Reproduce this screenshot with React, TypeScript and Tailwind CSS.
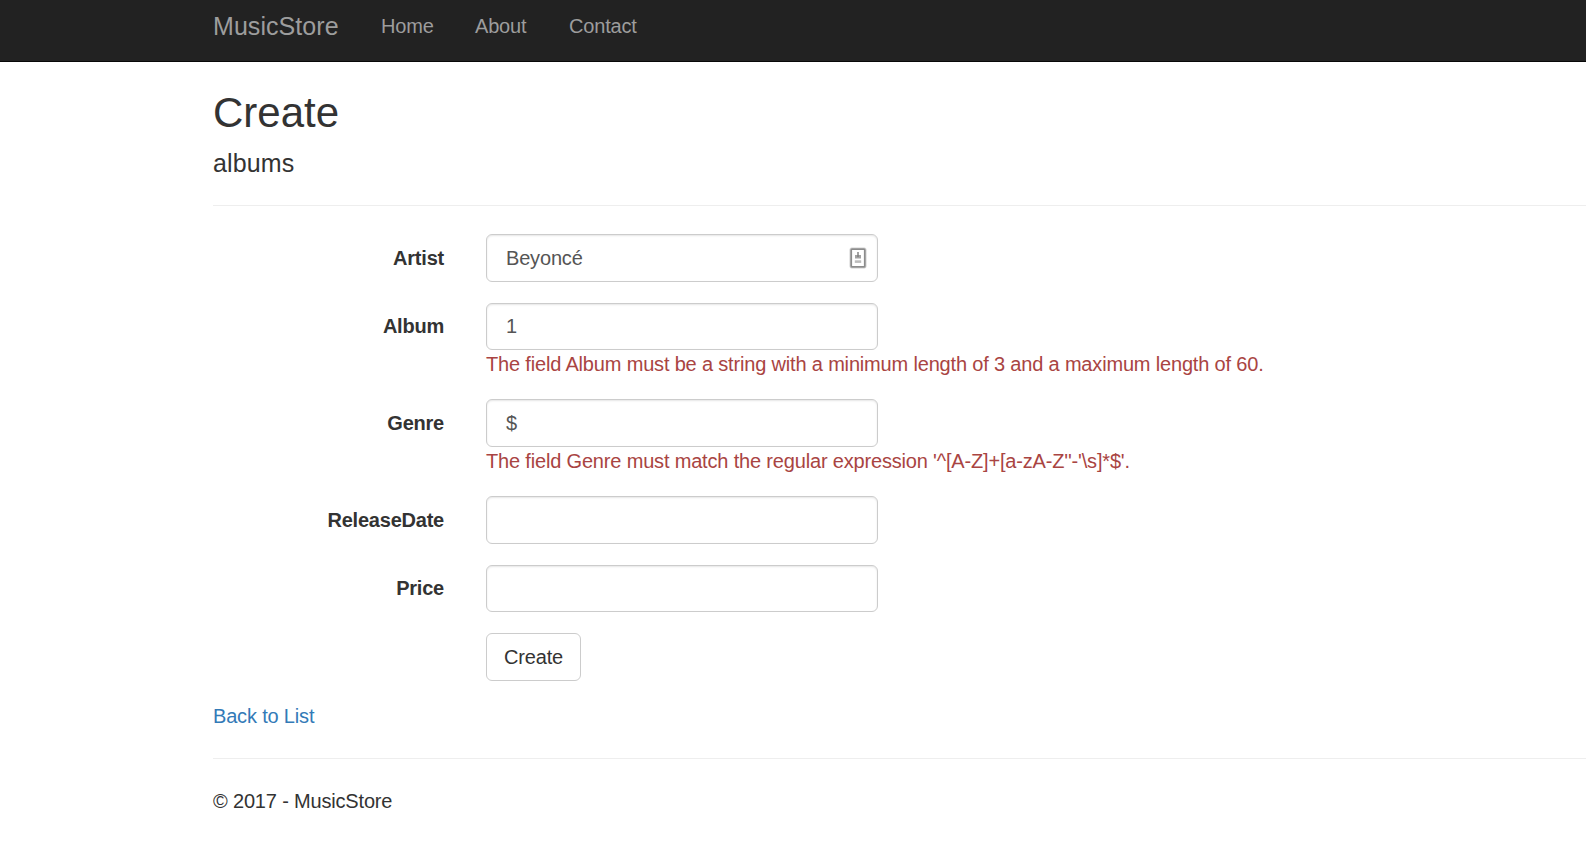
import type { ReactNode } from 'react';

type RowProps = { label?: string; pad?: string; className: string; error?: ReactNode; children: ReactNode };

function Row({ label, pad = 'pt-2.5', className, error, children }: RowProps) {
  return (
    <div className={`flex ${className}`}>
      <label className={`w-[231px] mr-[42px] text-right font-bold tracking-[-0.22px] ${pad}`}>{label}</label>
      <div className="flex-1 flex flex-col items-start">
        {children}
        {error && <span className="text-[#a94442] whitespace-nowrap">{error}</span>}
      </div>
    </div>
  );
}

function Field({ value, className, children }: { value?: string; className: string; children?: ReactNode }) {
  return (
    <div className={`flex w-[392px] justify-between rounded-[6px] border-[1.4px] border-[#ccc] bg-white pl-[19px] pr-[10px] text-[#555] shadow-[inset_0_1px_2px_rgba(0,0,0,0.1)] ${className}`}>
      <span>{value}</span>
      {children}
    </div>
  );
}

function ContactCardIcon() {
  return (
    <svg className="mt-[3px] h-[22px] w-[18px]" viewBox="0 0 18 22" fill="none">
      <rect x="1" y="1" width="16" height="20" rx="1.5" stroke="#d0d0d0" strokeWidth="1" />
      <rect x="2.2" y="2.2" width="13.6" height="17.6" rx="0.6" stroke="#8c8c8c" strokeWidth="1.8" />
      <path d="M8 5h2v3h2v3.5H6V8h2z" fill="#a3a3a3" />
      <path d="M8 8h2v2H8z" fill="#888" />
      <path d="M5.8 14.6h6.4" stroke="#bcbcbc" strokeWidth="2.6" />
    </svg>
  );
}

export default function App() {
  return (
    <div className="h-[864px] w-full overflow-hidden bg-white font-['Liberation_Sans',Arial,sans-serif] text-[20px] leading-[28px] tracking-[-0.173px] text-[#333]">
      <nav className="flex h-[62px] items-start border-b border-[#080808] bg-[#222] pl-[213px] pt-3 text-[#9d9d9d]">
        <a className="w-[168px] text-[25px] tracking-[0.06px]">MusicStore</a>
        <a className="w-[94px]">Home</a>
        <a className="w-[94px]">About</a>
        <a>Contact</a>
      </nav>
      <main className="pl-[213px]">
        <h2 className="pt-[28px] text-[42px] leading-[46px] tracking-normal">Create</h2>
        <h4 className="mt-[13px] h-[56px] text-[25px] tracking-[0.12px]">albums</h4>
        <hr className="mb-[28px] border-t border-[#eee]" />
        <form>
          <Row label="Artist" className="h-[69px]">
            <Field value="Beyoncé" className="h-[48px] pt-[9px]"><ContactCardIcon /></Field>
          </Row>
          <Row label="Album" pad="pt-[9px]" className="h-[96px]" error="The field Album must be a string with a minimum length of 3 and a maximum length of 60.">
            <Field value="1" className="h-[47px] pt-[8px]" />
          </Row>
          <Row label="Genre" className="h-[97px]" error={"The field Genre must match the regular expression '^[A-Z]+[a-zA-Z''-'\\s]*$'."}>
            <Field value="$" className="h-[48px] pt-[9px]" />
          </Row>
          <Row label="ReleaseDate" className="h-[69px]">
            <Field className="h-[48px]" />
          </Row>
          <Row label="Price" pad="pt-[9px]" className="h-[68px]">
            <Field className="h-[47px]" />
          </Row>
          <Row className="h-[69px]">
            <button type="button" className="flex h-[48px] w-[95px] justify-center rounded-[6px] border border-[#ccc] bg-white pt-[9px]">Create</button>
          </Row>
        </form>
        <a className="block h-[56px] text-[#337ab7]">Back to List</a>
        <hr className="mb-[28px] border-t border-[#eee]" />
        <footer>© 2017 - MusicStore</footer>
      </main>
    </div>
  );
}
